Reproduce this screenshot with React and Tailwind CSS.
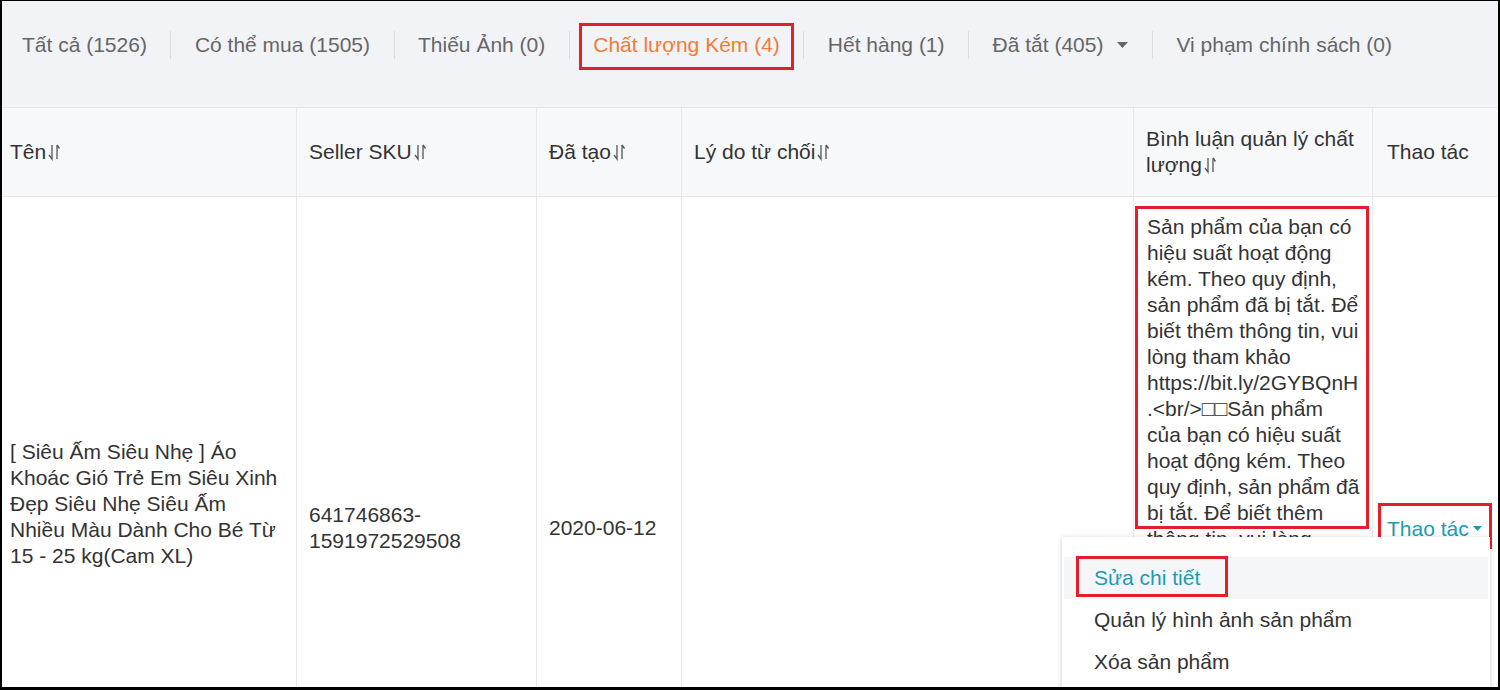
import React from 'react';

const tabs = [
  { label: 'Tất cả (1526)' },
  { label: 'Có thể mua (1505)' },
  { label: 'Thiếu Ảnh (0)' },
  { label: 'Chất lượng Kém (4)', active: true },
  { label: 'Hết hàng (1)' },
  { label: 'Đã tắt (405)', caret: true },
  { label: 'Vi phạm chính sách (0)' },
];

const nameLines = [
  '[ Siêu Ấm Siêu Nhẹ ] Áo',
  'Khoác Gió Trẻ Em Siêu Xinh',
  'Đẹp Siêu Nhẹ Siêu Ấm',
  'Nhiều Màu Dành Cho Bé Từ',
  '15 - 25 kg(Cam XL)',
];

// comment text, wrapped the way the reference wraps it
const commentBoxed = [
  'Sản phẩm của bạn có',
  'hiệu suất hoạt động',
  'kém. Theo quy định,',
  'sản phẩm đã bị tắt. Để',
  'biết thêm thông tin, vui',
  'lòng tham khảo',
  'https://bit.ly/2GYBQnH',
  '.<br/>□□Sản phẩm',
  'của bạn có hiệu suất',
  'hoạt động kém. Theo',
  'quy định, sản phẩm đã',
  'bị tắt. Để biết thêm',
];
const commentRest = [
  'thông tin, vui lòng',
  'tham khảo',
  'https://bit.ly/2GYBQnH',
  '.<br/>□□Sản phẩm',
  'của bạn có hiệu suất',
  'hoạt động kém. Theo',
  'quy định, sản phẩm đã',
  'bị tắt.',
];

const SortIcon = () => (
  <svg width="14" height="20" viewBox="0 0 14 20" className="ml-[1px]" fill="none">
    <path d="M5 3 V17 L2 13" stroke="#555" strokeWidth="1.3" />
    <path d="M10 3 V17 M10 3 L12.5 6.5" stroke="#555" strokeWidth="1.3" />
  </svg>
);

const cols = 'grid grid-cols-[295px_240px_145px_452px_239px_1fr]';
const cell = 'border-r border-[#e8e8e8] px-3 flex items-center';

const App = () => {
  return (
    <div className="w-[1500px] h-[690px] overflow-hidden bg-white border-black border-t border-x-2 border-b-[3px] font-['Liberation_Sans',Arial,sans-serif] text-[21px] leading-[26px] text-[#333]">
      {/* status tabs */}
      <div className="h-[107px] bg-[#f2f3f7] flex items-start gap-[23.5px] pt-[30px] pl-[20px] border-b border-[#e6e7eb]">
        {tabs.map((t, i) => (
          <React.Fragment key={t.label}>
            {i > 0 && <div className="w-px h-[28px] bg-[#dcdde0]" />}
            <div
              className={
                'relative h-[28px] flex items-center whitespace-nowrap ' +
                (t.active ? 'text-[#f37b34]' : 'text-[#666]')
              }
            >
              {t.label}
              {t.caret && (
                <svg width="11" height="6" viewBox="0 0 11 6" className="ml-[14px]">
                  <path d="M0 0 H11 L5.5 6 Z" fill="#666" />
                </svg>
              )}
              {t.active && (
                <div className="absolute -left-[14px] -right-[14px] -top-[8px] -bottom-[11px] border-[3px] border-[#e41e2b]" />
              )}
            </div>
          </React.Fragment>
        ))}
      </div>

      {/* table header */}
      <div className={cols + ' h-[89px] bg-[#f7f8fa] border-b border-[#e8e8e8]'}>
        <div className={cell + ' pl-2'}>
          Tên<SortIcon />
        </div>
        <div className={cell}>
          Seller SKU<SortIcon />
        </div>
        <div className={cell}>
          Đã tạo<SortIcon />
        </div>
        <div className={cell}>
          Lý do từ chối<SortIcon />
        </div>
        <div className={cell}>
          <div>
            <div className="whitespace-nowrap">Bình luận quản lý chất</div>
            <span className="inline-flex items-center">
              lượng<SortIcon />
            </span>
          </div>
        </div>
        <div className="px-[14px] flex items-center">Thao tác</div>
      </div>

      {/* product row */}
      <div className={cols + ' h-[662px]'}>
        <div className={cell + ' pl-2 pb-[48px]'}>
          <div>
            {nameLines.map((l) => (
              <div key={l} className="whitespace-nowrap">{l}</div>
            ))}
          </div>
        </div>
        <div className={cell}>
          <div>
            641746863-
            <br />
            1591972529508
          </div>
        </div>
        <div className={cell}>2020-06-12</div>
        <div className={cell} />
        <div className="border-r border-[#e8e8e8] pl-[13px] pt-[17px]">
          <div className="relative">
            {commentBoxed.map((l, i) => (
              <div key={i} className="whitespace-nowrap">{l}</div>
            ))}
            <div className="absolute -top-[8px] -bottom-[3px] -left-[12px] w-[234px] border-[3px] border-[#e41e2b]" />
          </div>
          {commentRest.map((l, i) => (
            <div key={i} className="whitespace-nowrap">{l}</div>
          ))}
        </div>
        <div className="relative pl-[14px] flex items-center">
          <div className="inline-flex items-center text-[#1a9cb7] leading-[23px] whitespace-nowrap">
            Thao tác
            <svg width="9" height="5" viewBox="0 0 9 5" className="ml-[4px]">
              <path d="M0 0 H9 L4.5 5 Z" fill="#1a9cb7" />
            </svg>
          </div>
          <div className="absolute left-[5px] top-[306px] w-[114px] h-[46px] border-[3px] border-[#e41e2b]" />
          {/* dropdown menu */}
          <div className="absolute right-[8px] top-[340px] w-[428px] h-[200px] bg-white shadow-[0_1px_6px_rgba(0,0,0,0.18)] pt-[20px] px-[2px] z-10">
            <div className="relative h-[42px] bg-[#f5f6f8] flex items-center pl-[30px] text-[#1a9cb7]">
              Sửa chi tiết
              <div className="absolute left-[12px] -top-[1px] h-[41px] w-[152px] border-[3px] border-[#e41e2b]" />
            </div>
            <div className="h-[42px] flex items-center pl-[30px] text-[#333]">Quản lý hình ảnh sản phẩm</div>
            <div className="h-[42px] flex items-center pl-[30px] text-[#333]">Xóa sản phẩm</div>
          </div>
        </div>
      </div>
    </div>
  );
};

export default App;
